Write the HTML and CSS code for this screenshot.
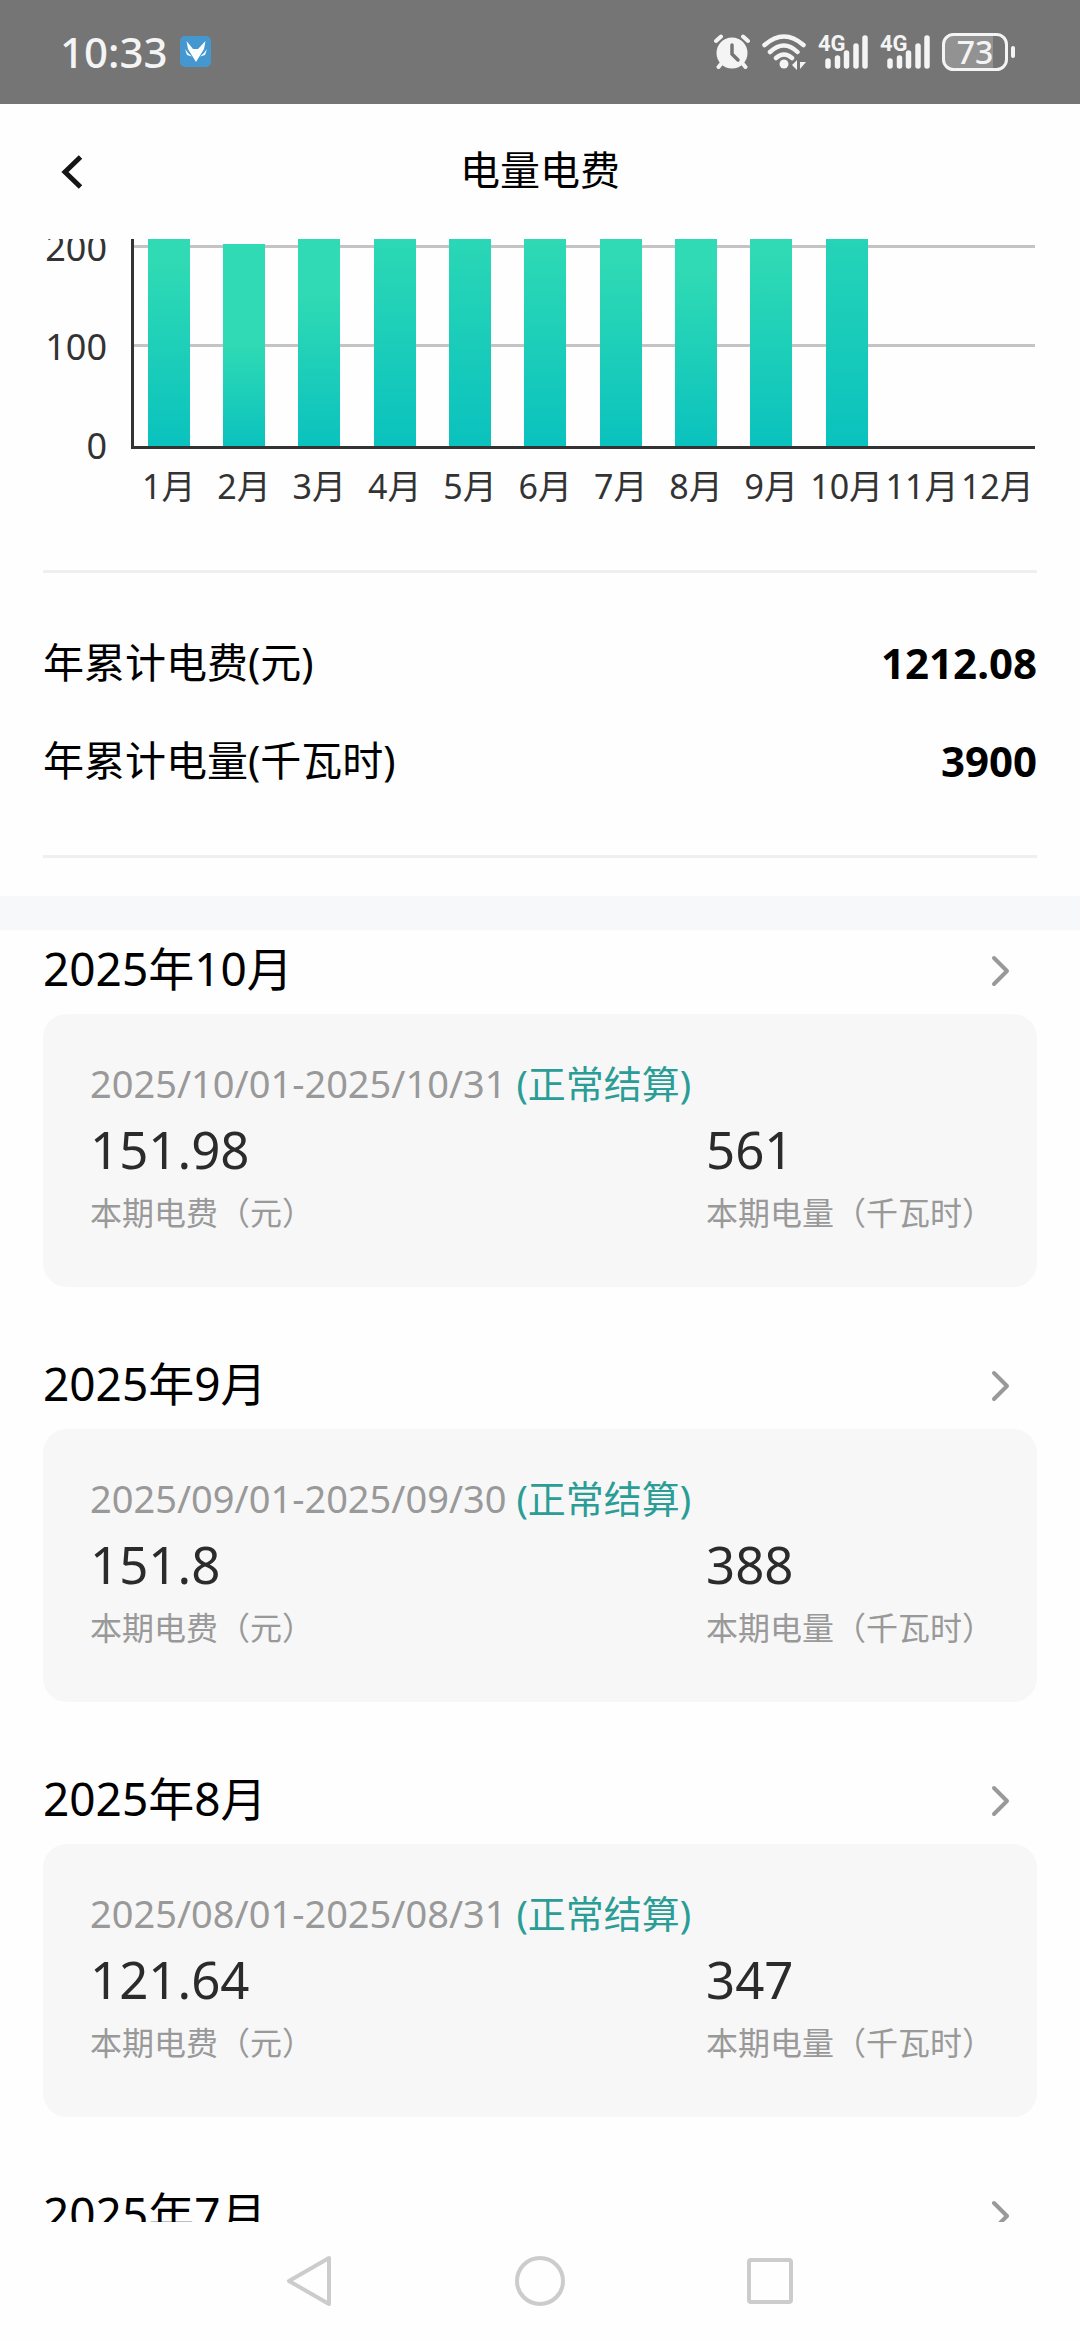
FILE: index.html
```html
<!DOCTYPE html>
<html lang="zh-CN">
<head>
<meta charset="utf-8">
<meta name="viewport" content="width=device-width, initial-scale=1">
<title>电量电费</title>
<link rel="stylesheet" href="styles.css">
</head>
<body>
<div class="status">
  <div class="status-side">
    <span class="clock">10:33</span>
    <svg class="app-icon" width="32" height="32" viewBox="0 0 32 32" aria-hidden="true">
      <rect width="31" height="31" rx="5" fill="#4598cf"/>
      <path d="M6.500 5 13 13H18L25.500 5 24 13 16 26 8 13ZM5 13 8 17 12 20.500 7 19ZM27 13 24 17 20 20.500 25 19Z" fill="#fff"/>
    </svg>
  </div>
  <div class="status-side status-icons">
    <svg width="36" height="36" viewBox="0 0 36 36" aria-hidden="true">
      <g stroke="#f4f4f4" stroke-width="4" stroke-linecap="round" fill="none">
        <path d="M2 7 7 2.500M34 7 29 2.500M7 30 4.500 33M29 30 31.500 33"/>
      </g>
      <circle cx="18" cy="19" r="15.500" fill="#f4f4f4"/>
      <path d="M18 11V20L24 26" fill="none" stroke="#757575" stroke-width="3.500" stroke-linecap="round"/>
    </svg>
    <svg width="44" height="36" viewBox="0 0 44 36" aria-hidden="true">
      <g stroke="#f4f4f4" stroke-width="4.500" stroke-linecap="round" fill="none">
        <path d="M2.500 11Q22-6 41.500 11M8 18Q22 5 35.500 18M14 24Q22 17 30 24"/>
      </g>
      <circle cx="22" cy="30" r="4.500" fill="#f4f4f4"/>
      <path d="M30 31 35 26V36M44 28H38V35Z" fill="#f4f4f4"/>
    </svg>
    <div class="signal">
      <span class="net">4G</span>
      <svg width="50" height="36" viewBox="0 0 50 36" aria-hidden="true">
        <path d="M10 27V32M19.500 24V32M28.500 19V32M38 12V32M47 4V32" stroke="#f4f4f4" stroke-width="5.500" stroke-linecap="round"/>
      </svg>
    </div>
    <div class="signal">
      <span class="net">4G</span>
      <svg width="50" height="36" viewBox="0 0 50 36" aria-hidden="true">
        <path d="M10 27V32M19.500 24V32M28.500 19V32M38 12V32M47 4V32" stroke="#f4f4f4" stroke-width="5.500" stroke-linecap="round"/>
      </svg>
    </div>
    <div class="battery">
      <svg width="74" height="38" viewBox="0 0 74 38" aria-hidden="true">
        <path d="M9 3H51V35H9Q3 35 3 29V9Q3 3 9 3Z" fill="#929292"/>
        <rect x="1.500" y="1.500" width="63" height="35" rx="10" fill="none" stroke="#f4f4f4" stroke-width="3"/>
        <rect x="69" y="13" width="4" height="12" rx="2" fill="#f4f4f4"/>
      </svg>
      <span class="charge">73</span>
    </div>
  </div>
</div>

<header class="bar">
  <button class="back" type="button" aria-label="返回">
    <svg width="24" height="36" viewBox="0 0 24 36" aria-hidden="true">
      <path d="M20.500 3 5 18 20.500 33" fill="none" stroke="#151515" stroke-width="5"/>
    </svg>
  </button>
  <h1 class="title">电量电费</h1>
</header>

<main class="scroll">
  <section class="chart">
    <div class="scale"><span>200</span><span>100</span><span>0</span></div>
    <div class="graph">
      <div class="plot">
        <i class="col" style="--kwh:370"></i>
        <i class="col" style="--kwh:204"></i>
        <i class="col" style="--kwh:305"></i>
        <i class="col" style="--kwh:450"></i>
        <i class="col" style="--kwh:480"></i>
        <i class="col" style="--kwh:420"></i>
        <i class="col" style="--kwh:375"></i>
        <i class="col" style="--kwh:347"></i>
        <i class="col" style="--kwh:388"></i>
        <i class="col" style="--kwh:561"></i>
      </div>
      <div class="months">
        <span>1月</span><span>2月</span><span>3月</span><span>4月</span><span>5月</span><span>6月</span><span>7月</span><span>8月</span><span>9月</span><span>10月</span><span>11月</span><span>12月</span>
      </div>
    </div>
  </section>

  <dl class="totals">
    <div class="total"><dt>年累计电费(元)</dt><dd>1212.08</dd></div>
    <div class="total"><dt>年累计电量(千瓦时)</dt><dd>3900</dd></div>
  </dl>

  <div class="records">
    <section class="record">
      <a class="record-head" href="#2025-10"><h2 class="month">2025年10月</h2><svg class="arrow" width="22" height="34" viewBox="0 0 22 34" aria-hidden="true"><path d="M4 4 17 17 4 30"/></svg></a>
      <div class="card">
        <p class="period">2025/10/01-2025/10/31 <span class="tag">(正常结算)</span></p>
        <div class="figures">
          <div><p class="value">151.98</p><p class="caption">本期电费（元）</p></div>
          <div><p class="value">561</p><p class="caption">本期电量（千瓦时）</p></div>
        </div>
      </div>
    </section>
    <section class="record">
      <a class="record-head" href="#2025-09"><h2 class="month">2025年9月</h2><svg class="arrow" width="22" height="34" viewBox="0 0 22 34" aria-hidden="true"><path d="M4 4 17 17 4 30"/></svg></a>
      <div class="card">
        <p class="period">2025/09/01-2025/09/30 <span class="tag">(正常结算)</span></p>
        <div class="figures">
          <div><p class="value">151.8</p><p class="caption">本期电费（元）</p></div>
          <div><p class="value">388</p><p class="caption">本期电量（千瓦时）</p></div>
        </div>
      </div>
    </section>
    <section class="record">
      <a class="record-head" href="#2025-08"><h2 class="month">2025年8月</h2><svg class="arrow" width="22" height="34" viewBox="0 0 22 34" aria-hidden="true"><path d="M4 4 17 17 4 30"/></svg></a>
      <div class="card">
        <p class="period">2025/08/01-2025/08/31 <span class="tag">(正常结算)</span></p>
        <div class="figures">
          <div><p class="value">121.64</p><p class="caption">本期电费（元）</p></div>
          <div><p class="value">347</p><p class="caption">本期电量（千瓦时）</p></div>
        </div>
      </div>
    </section>
    <section class="record">
      <a class="record-head" href="#2025-07"><h2 class="month">2025年7月</h2><svg class="arrow" width="22" height="34" viewBox="0 0 22 34" aria-hidden="true"><path d="M4 4 17 17 4 30"/></svg></a>
    </section>
  </div>
</main>

<nav class="keys" aria-label="系统导航">
  <button class="key" type="button" aria-label="返回">
    <svg width="52" height="52" viewBox="0 0 52 52" aria-hidden="true"><path d="M45 3V49L5 26Z"/></svg>
  </button>
  <button class="key" type="button" aria-label="主页">
    <svg width="52" height="52" viewBox="0 0 52 52" aria-hidden="true"><circle cx="26" cy="26" r="23"/></svg>
  </button>
  <button class="key" type="button" aria-label="最近任务">
    <svg width="52" height="52" viewBox="0 0 52 52" aria-hidden="true"><rect x="5" y="5" width="42" height="42" rx="2"/></svg>
  </button>
</nav>
</body>
</html>
```
FILE: styles.css
```css
* { box-sizing: border-box; margin: 0; padding: 0; }

body {
  display: flex;
  flex-direction: column;
  height: 100vh;
  background: #fefefe;
  color: #000;
  font-family: "Noto Sans", "Noto Sans CJK SC", sans-serif;
  font-size: 40px;
  line-height: 50px;
}

button { border: 0; background: none; font: inherit; cursor: pointer; }
svg { display: block; flex: none; }

/* status bar */
.status {
  display: flex;
  flex: none;
  justify-content: space-between;
  align-items: center;
  height: 104px;
  padding: 0 64px 0 60px;
  background: #757575;
}
.status-side { display: flex; align-items: center; gap: 12px; }
.clock { color: #f4f4f4; font-size: 42px; font-weight: 500; }

/* labels laid over the signal bars and the battery */
.signal, .battery { position: relative; color: #f4f4f4; }
.net {
  position: absolute;
  left: 0;
  top: -3px;
  font-family: "Roboto", sans-serif;
  font-size: 22px;
  font-weight: 700;
  line-height: 26px;
}
.charge {
  position: absolute;
  inset: 0 8px 0 0;
  font-size: 32px;
  font-weight: 500;
  line-height: 38px;
  text-align: center;
}

/* title bar */
.bar {
  display: grid;
  flex: none;
  grid-template-columns: 1fr auto 1fr;
  align-items: center;
  height: 135px;
  padding: 0 60px;
}
.back { justify-self: start; }
.title { padding-bottom: 4px; font-size: 40px; font-weight: 400; }

.scroll { flex: 1; min-height: 0; overflow: hidden; }

/* yearly chart */
.chart {
  display: flex;
  height: 331px;
  padding: 0 45px 0 43px;
  overflow: hidden;
  color: #333;
}
.scale {
  display: flex;
  flex: none;
  flex-direction: column;
  justify-content: flex-end;
  width: 88px;
  height: 256px;
  padding-right: 24px;
  text-align: right;
  font-size: 36px;
  line-height: 99px;
}
.graph { flex: 1; }
.plot, .months { display: grid; grid-template-columns: repeat(12, 1fr); }
.plot {
  grid-template-rows: 207px;
  align-items: end;
  justify-items: center;
  overflow: hidden;
  border-bottom: 3px solid #333;
  background:
    linear-gradient(#333, #333) left top / 3px 100% no-repeat,
    linear-gradient(#c4c4c4, #c4c4c4) left bottom 99px / 100% 3px no-repeat,
    linear-gradient(#c4c4c4, #c4c4c4) left bottom 198px / 100% 3px no-repeat;
}
.col {
  grid-row: 1;
  width: 42px;
  height: calc(var(--kwh) * 99px / 100);
  background: linear-gradient(#2fdab4 50%, #0ac2be);
}
.months { padding-top: 12px; font-size: 34px; text-align: center; white-space: nowrap; }

/* yearly totals */
.totals {
  display: grid;
  gap: 48px;
  margin: 0 43px 38px;
  padding: 65px 0 69px;
  border: solid #efefef;
  border-width: 3px 0;
}
.total { display: flex; justify-content: space-between; }
.total dt { font-size: 41px; line-height: 48px; }
.total dd { font-size: 42px; font-weight: 700; }

/* monthly bills */
.records { border-top: 34px solid #f7f8fa; }
.record { padding: 0 43px 58px; }
.record-head {
  display: flex;
  justify-content: space-between;
  align-items: center;
  height: 84px;
  padding: 0 25px 2px 0;
  color: #000;
  text-decoration: none;
}
.month { padding-bottom: 6px; font-size: 46px; font-weight: 400; }
.arrow { fill: none; stroke: #999; stroke-width: 4; stroke-linecap: round; stroke-linejoin: round; }
.card {
  height: 273px;
  padding: 44px 43px 0 47px;
  border-radius: 24px;
  background: #f7f7f7;
}
.period { color: #999; font-size: 38px; }
.tag { color: #2a9d96; }
.figures { display: flex; justify-content: space-between; }
.value { padding: 11px 0 2px; color: #2b2b2b; font-size: 51px; line-height: 60px; }
.caption { color: #999; font-size: 32px; line-height: 64px; }

/* system keys */
.keys {
  display: flex;
  flex: none;
  justify-content: center;
  align-items: center;
  gap: 178px;
  height: 118px;
}
.key svg { fill: none; stroke: #ccc; stroke-width: 4; stroke-linejoin: round; }
```
